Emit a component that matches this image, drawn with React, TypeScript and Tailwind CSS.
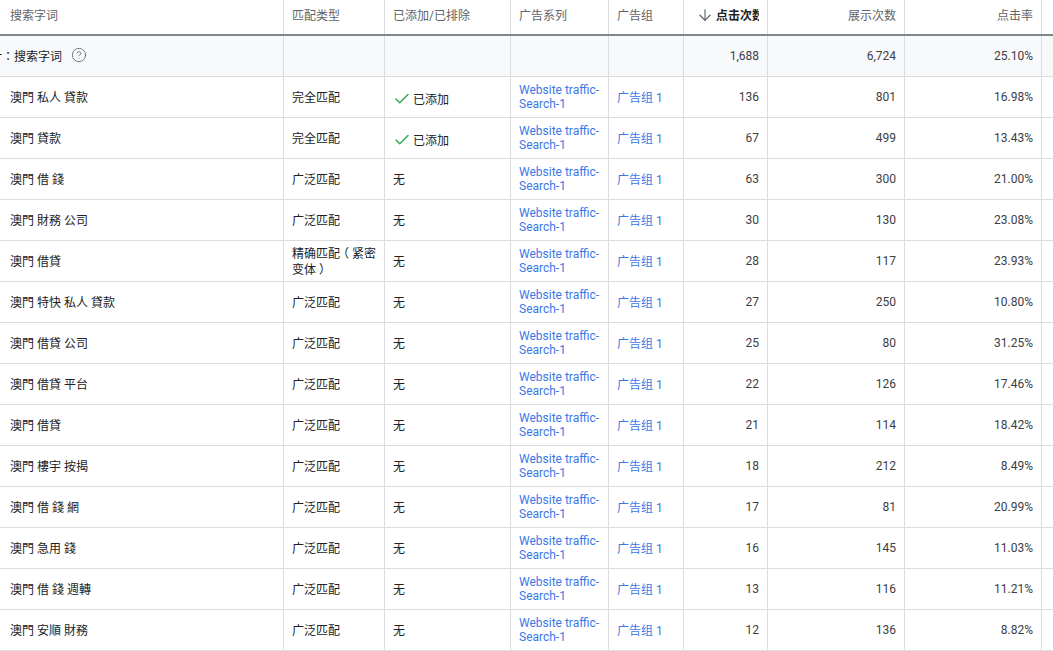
import { ArrowDown, Check, CircleHelp } from "lucide-react"

const rows = [
  { term: "澳門 私人 貸款", match: "完全匹配", added: true, clicks: "136", views: "801", rate: "16.98%" },
  { term: "澳門 貸款", match: "完全匹配", added: true, clicks: "67", views: "499", rate: "13.43%" },
  { term: "澳門 借 錢", match: "广泛匹配", added: false, clicks: "63", views: "300", rate: "21.00%" },
  { term: "澳門 財務 公司", match: "广泛匹配", added: false, clicks: "30", views: "130", rate: "23.08%" },
  { term: "澳門 借貸", match: "variant", added: false, clicks: "28", views: "117", rate: "23.93%" },
  { term: "澳門 特快 私人 貸款", match: "广泛匹配", added: false, clicks: "27", views: "250", rate: "10.80%" },
  { term: "澳門 借貸 公司", match: "广泛匹配", added: false, clicks: "25", views: "80", rate: "31.25%" },
  { term: "澳門 借貸 平台", match: "广泛匹配", added: false, clicks: "22", views: "126", rate: "17.46%" },
  { term: "澳門 借貸", match: "广泛匹配", added: false, clicks: "21", views: "114", rate: "18.42%" },
  { term: "澳門 樓宇 按揭", match: "广泛匹配", added: false, clicks: "18", views: "212", rate: "8.49%" },
  { term: "澳門 借 錢 網", match: "广泛匹配", added: false, clicks: "17", views: "81", rate: "20.99%" },
  { term: "澳門 急用 錢", match: "广泛匹配", added: false, clicks: "16", views: "145", rate: "11.03%" },
  { term: "澳門 借 錢 週轉", match: "广泛匹配", added: false, clicks: "13", views: "116", rate: "11.21%" },
  { term: "澳門 安順 財務", match: "广泛匹配", added: false, clicks: "12", views: "136", rate: "8.82%" },
]

const gridCols = "grid grid-cols-[284px_101px_126px_98px_75px_84px_137px_137px_11px]"
const cell = "flex items-center border-r border-[#dadce0] overflow-hidden"
const tc = "font-['Noto_Sans_CJK_TC',sans-serif]"

const App = () => {
  return (
    <main className="h-[651px] w-[1053px] overflow-hidden bg-white text-xs text-[#3c4043] font-['Roboto','Noto_Sans_CJK_SC',sans-serif]">
      <div className={`${gridCols} h-[36px] border-b-2 border-[#80868b] text-[#5f6368]`}>
        <div className={`${cell} pl-[10px] pb-[2px]`}>搜索字词</div>
        <div className={`${cell} pl-2 pb-[2px]`}>匹配类型</div>
        <div className={`${cell} pl-2 pb-[2px]`}>已添加/已排除</div>
        <div className={`${cell} pl-2 pb-[2px]`}>广告系列</div>
        <div className={`${cell} pl-2 pb-[2px]`}>广告组</div>
        <div className={`${cell} pl-3 font-bold text-[#202124] whitespace-nowrap`}>
          <ArrowDown size={18} strokeWidth={1.5} className="mr-[2px] mb-[5px] shrink-0 text-[#5f6368]" />
          <span className="w-[43px] shrink-0 overflow-hidden pb-[2px]">点击次数</span>
        </div>
        <div className={`${cell} justify-end pr-2 pb-[2px]`}>展示次数</div>
        <div className={`${cell} justify-end pr-2 pb-[2px]`}>点击率</div>
        <div />
      </div>

      <div className={`${gridCols} h-[41px] border-b border-[#dadce0] bg-[#f8f9fa]`}>
        <div className={`${cell} text-[#202124]`}>
          <span className="-ml-[22px] whitespace-nowrap">总计<span className={tc}>：</span>搜索字词</span>
          <CircleHelp size={16} strokeWidth={1.25} className="ml-[9px] -mt-[3px] shrink-0 text-[#5f6368]" />
        </div>
        <div className={cell}></div>
        <div className={cell}></div>
        <div className={cell}></div>
        <div className={cell}></div>
        <div className={`${cell} justify-end pr-2`}>1,688</div>
        <div className={`${cell} justify-end pr-2`}>6,724</div>
        <div className={`${cell} justify-end pr-2`}>25.10%</div>
        <div />
      </div>

      {rows.map((r, i) => (
        <div key={i} className={`${gridCols} h-[41px] border-b border-[#dadce0]`}>
          <div className={`${cell} pl-[10px] pt-[2px] text-[#202124]`}>{r.term}</div>
          <div className={`${cell} pl-2 pr-1 pt-[2px] leading-[16px] text-[#202124]`}>
            {r.match === "variant" ? (
              <span>精确匹配<span className="inline-block -translate-x-[3px]">（</span>紧密变体<span className="inline-block translate-x-[3px]">）</span></span>
            ) : (
              r.match
            )}
          </div>
          {r.added ? (
            <div className={`${cell} pl-2 text-[#202124]`}>
              <Check size={18} strokeWidth={2} className="mr-[2px] mt-[3px] shrink-0 text-[#34a853]" />
              <span className="mt-[6px]">已添加</span>
            </div>
          ) : (
            <div className={`${cell} pl-2 pt-[2px] text-[#202124]`}>无</div>
          )}
          <div className={`${cell} pl-2 leading-[14px] text-[#3b78e7]`}>Website traffic-<br />Search-1</div>
          <div className={`${cell} pl-2 pt-[2px] text-[#3b78e7]`}>广告组 1</div>
          <div className={`${cell} justify-end pr-2`}>{r.clicks}</div>
          <div className={`${cell} justify-end pr-2`}>{r.views}</div>
          <div className={`${cell} justify-end pr-2`}>{r.rate}</div>
          <div />
        </div>
      ))}
    </main>
  )
}

export default App
